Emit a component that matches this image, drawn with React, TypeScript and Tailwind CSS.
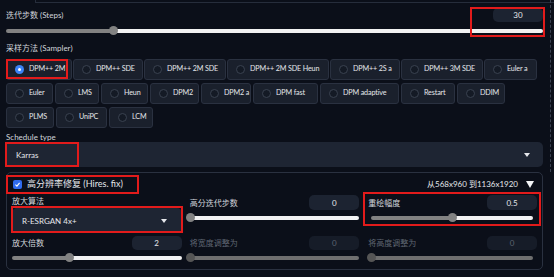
import React from "react";

const font = "font-['Lato','Noto_Sans_CJK_SC',sans-serif]";

function Slider({ pct, disabled = false }: { pct: number; disabled?: boolean }) {
  return (
    <div className="relative h-[9px] flex items-center">
      <div className="flex h-[4px] w-full rounded-full overflow-hidden">
        <div className={disabled ? "bg-[#6f6f6f] h-full" : "bg-[#828282] h-full"} style={{ width: `${pct}%` }} />
        <div className={disabled ? "bg-[#6f6f6f] h-full flex-1" : "bg-[#f2f2f2] h-full flex-1"} />
      </div>
      <div
        className={`absolute top-0 w-[9px] h-[9px] rounded-full ${disabled ? "bg-[#555]" : "bg-[#828282]"}`}
        style={{ left: `calc(${pct}% - 4.5px)` }}
      />
    </div>
  );
}

function NumBox({ value, disabled = false, h = "h-[15px]" }: { value: string; disabled?: boolean; h?: string }) {
  return (
    <div
      className={`w-[50px] ${h} rounded-[5px] flex items-center justify-center text-[8px] ${
        disabled ? "text-[#5d6470] bg-[#161c28]" : "text-[#e5e7eb] bg-[#1c2331]"
      }`}
    >
      {value}
    </div>
  );
}

function Radio({ label, w, checked = false }: { label: string; w: string; checked?: boolean }) {
  return (
    <div
      className={`${w} h-[21px] shrink-0 flex items-center gap-[5px] pl-[8px] bg-[#1a202c] border border-[#2a3140] rounded-[3px] text-[7.2px] tracking-[-0.15px] text-[#e5e7eb]`}
    >
      {checked ? (
        <span className="w-[9px] h-[9px] shrink-0 rounded-full bg-[#3b82f6] flex items-center justify-center">
          <span className="w-[3px] h-[3px] rounded-full bg-white" />
        </span>
      ) : (
        <span className="w-[9px] h-[9px] shrink-0 rounded-full bg-[#141a25] border border-[#3a4250]" />
      )}
      <span className="whitespace-nowrap">{label}</span>
    </div>
  );
}

function Caret() {
  return (
    <svg width="6" height="4" viewBox="0 0 6 4">
      <path d="M0 0 L6 0 L3 4 Z" fill="#e5e7eb" />
    </svg>
  );
}

function Red({ cls }: { cls: string }) {
  return <div className={`absolute border-2 border-[#e21b1b] pointer-events-none ${cls}`} />;
}

export default function App() {
  return (
    <div className={`relative w-[554px] h-[277px] bg-[#0b0f19] overflow-hidden ${font}`}>
      <div className="h-[3px] ml-[35px] border-b border-l border-[#262d3b]" />
      <div className="absolute right-[3px] top-0 h-[172px] border-r border-dashed border-[#3a4150]" />

      <div className="pl-[6px] pr-[11px]">
        <div className="mt-[5px] h-[14px] flex items-center justify-between">
          <span className="text-[8px] text-[#d1d5db]">迭代步数 (Steps)</span>
          <NumBox value="30" h="h-[14px]" />
        </div>
        <div className="mt-[4px]">
          <Slider pct={20} />
        </div>

        <div className="mt-[7px] h-[12px] flex items-center text-[8px] text-[#d1d5db]">采样方法 (Sampler)</div>

        <div className="mt-[5px] flex flex-col gap-[3px]">
          <div className="flex gap-[1px]">
            <Radio label="DPM++ 2M" w="w-[66px]" checked />
            <Radio label="DPM++ SDE" w="w-[70px]" />
            <Radio label="DPM++ 2M SDE" w="w-[82px]" />
            <Radio label="DPM++ 2M SDE Heun" w="w-[102px]" />
            <Radio label="DPM++ 2S a" w="w-[70px]" />
            <Radio label="DPM++ 3M SDE" w="w-[82px]" />
            <Radio label="Euler a" w="w-[53px]" />
          </div>
          <div className="flex gap-[2px]">
            <Radio label="Euler" w="w-[47px]" />
            <Radio label="LMS" w="w-[44px]" />
            <Radio label="Heun" w="w-[47px]" />
            <Radio label="DPM2" w="w-[49px]" />
            <Radio label="DPM2 a" w="w-[50px]" />
            <Radio label="DPM fast" w="w-[65px]" />
            <Radio label="DPM adaptive" w="w-[79px]" />
            <Radio label="Restart" w="w-[54px]" />
            <Radio label="DDIM" w="w-[48px]" />
          </div>
          <div className="flex gap-[2px]">
            <Radio label="PLMS" w="w-[48px]" />
            <Radio label="UniPC" w="w-[51px]" />
            <Radio label="LCM" w="w-[44px]" />
          </div>
        </div>

        <div className="mt-[3px] h-[11px] flex items-center text-[8px] text-[#d1d5db]">Schedule type</div>
        <div className="h-[25px] rounded-[5px] bg-[#1e2533] flex items-center justify-between pl-[10px] pr-[13px] text-[8px] text-[#e5e7eb]">
          <span>Karras</span>
          <Caret />
        </div>

        <div className="mt-[5px] h-[98px] border border-[#2a3140] rounded-[5px] px-[5px]">
          <div className="h-[22px] flex items-center justify-between pl-[1px] pr-[3px]">
            <div className="flex items-center gap-[5px]">
              <span className="w-[9px] h-[9px] rounded-[2px] bg-[#2f6bf0] flex items-center justify-center">
                <svg width="7" height="7" viewBox="0 0 10 10">
                  <path d="M2 5.2 L4.2 7.3 L8 2.8" stroke="white" strokeWidth="1.6" fill="none" />
                </svg>
              </span>
              <span className="text-[9px] text-[#e5e7eb]">高分辨率修复 (Hires. fix)</span>
            </div>
            <div className="flex items-center gap-[8px]">
              <span className="text-[8px] text-[#e5e7eb]">从568x960 到1136x1920</span>
              <svg width="8" height="7" viewBox="0 0 8 7">
                <path d="M0 0 L8 0 L4 7 Z" fill="#f3f4f6" />
              </svg>
            </div>
          </div>

          <div className="grid grid-cols-3 gap-x-[8px] gap-y-[3px] text-[8px]">
            <div>
              <div className="h-[12px] flex items-center text-[#d1d5db]">放大算法</div>
              <div className="mt-[1px] h-[25px] rounded-[5px] bg-[#1e2533] flex items-center justify-between pl-[10px] pr-[15px] text-[#e5e7eb]">
                <span>R-ESRGAN 4x+</span>
                <Caret />
              </div>
            </div>
            <div>
              <div className="h-[15px] flex items-center justify-between">
                <span className="text-[#d1d5db]">高分迭代步数</span>
                <NumBox value="0" />
              </div>
              <div className="mt-[3px] pl-[1px]">
                <Slider pct={0} />
              </div>
            </div>
            <div>
              <div className="h-[15px] flex items-center justify-between">
                <span className="text-[#d1d5db] pl-[1px]">重绘幅度</span>
                <NumBox value="0.5" />
              </div>
              <div className="mt-[3px] pl-[4px] pr-[4px]">
                <Slider pct={50} />
              </div>
            </div>

            <div>
              <div className="h-[14px] flex items-center justify-between">
                <span className="text-[#d1d5db]">放大倍数</span>
                <NumBox value="2" h="h-[14px]" />
              </div>
              <div className="mt-[3px]">
                <Slider pct={34} />
              </div>
            </div>
            <div>
              <div className="h-[14px] flex items-center justify-between">
                <span className="text-[#5f6672]">将宽度调整为</span>
                <NumBox value="0" disabled h="h-[14px]" />
              </div>
              <div className="mt-[3px] pl-[1px]">
                <Slider pct={0} disabled />
              </div>
            </div>
            <div>
              <div className="h-[14px] flex items-center justify-between">
                <span className="text-[#5f6672] pl-[1px]">将高度调整为</span>
                <NumBox value="0" disabled h="h-[14px]" />
              </div>
              <div className="mt-[3px] pl-[4px] pr-[4px]">
                <Slider pct={0} disabled />
              </div>
            </div>
          </div>
        </div>
      </div>

      <Red cls="left-[470px] top-[7px] w-[75px] h-[30px]" />
      <Red cls="left-[6px] top-[59px] w-[62px] h-[20px]" />
      <Red cls="left-[5px] top-[142px] w-[74px] h-[25px]" />
      <Red cls="left-[6px] top-[175px] w-[133px] h-[19px]" />
      <Red cls="left-[11px] top-[206px] w-[172px] h-[27px]" />
      <Red cls="left-[363px] top-[192px] w-[178px] h-[34px]" />
    </div>
  );
}
